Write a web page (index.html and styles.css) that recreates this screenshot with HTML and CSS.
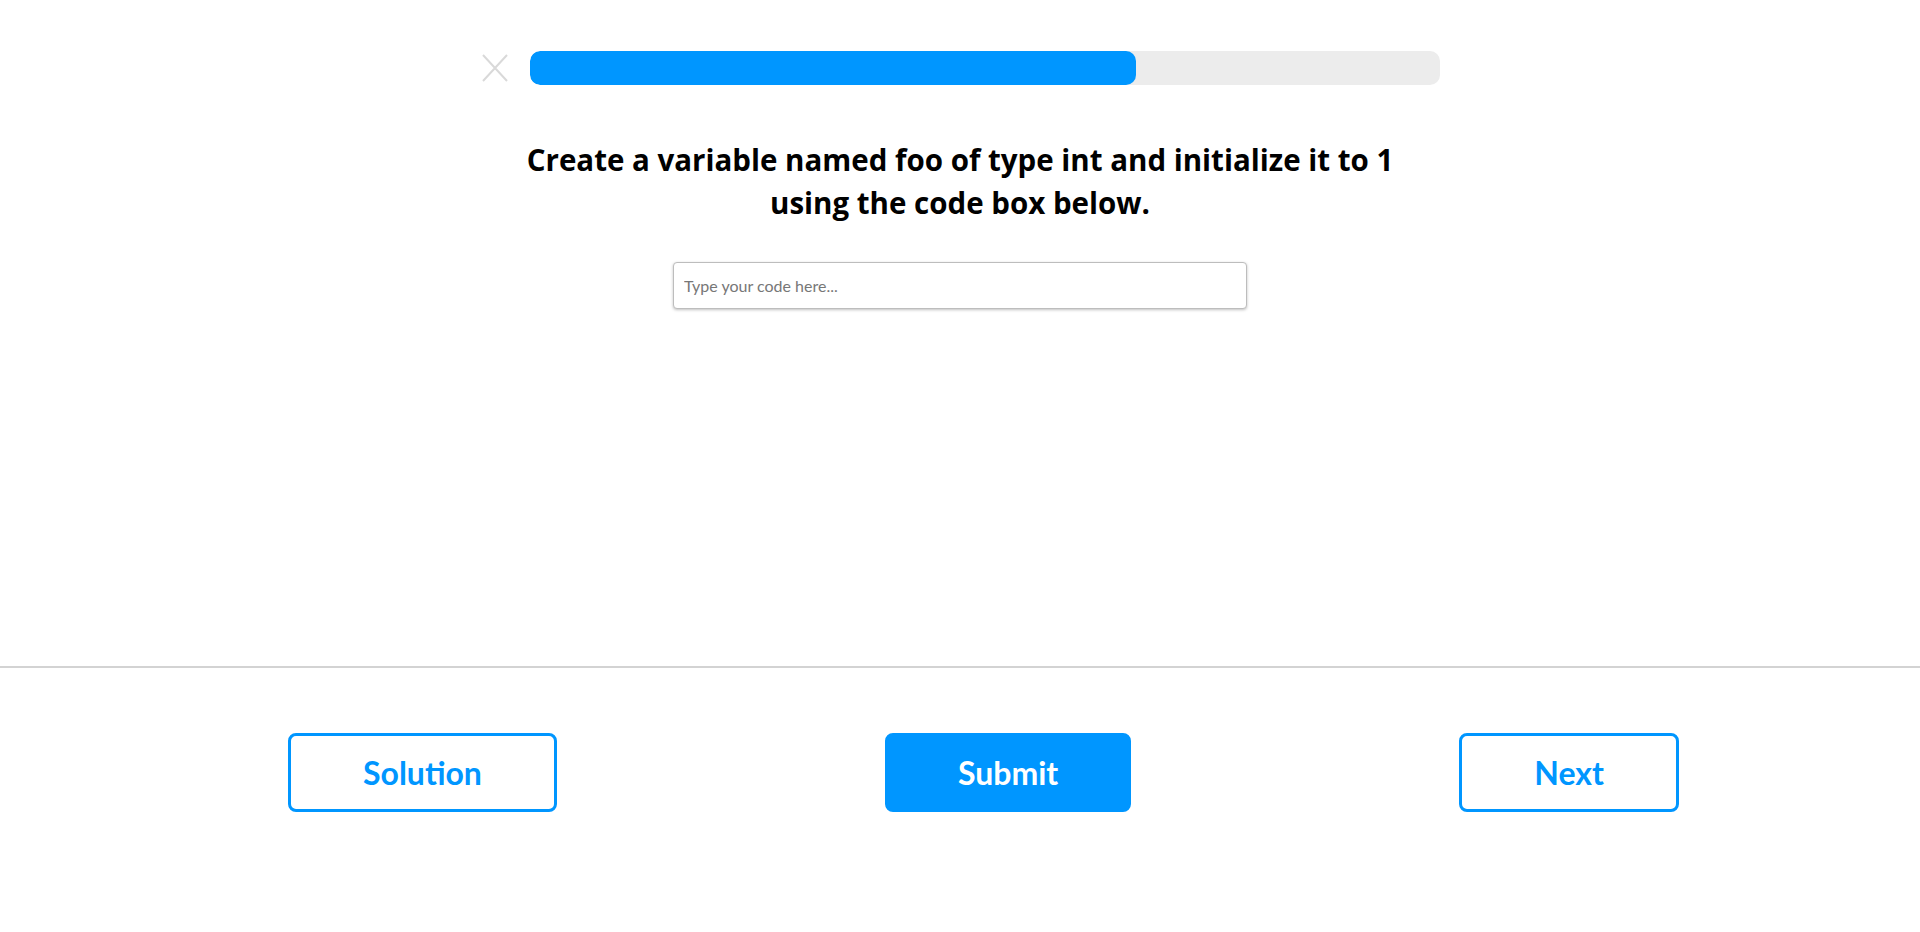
FILE: index.html
```html
<!DOCTYPE html>
<html lang="en">
<head>
<meta charset="utf-8">
<title>Lesson</title>
<link rel="stylesheet" href="styles.css">
</head>
<body>
<div class="page">
  <main class="lesson">
    <div class="progress-row">
      <button class="close" aria-label="Close">
        <svg width="28" height="28" viewBox="0 0 28 28"><path d="M2 1 L26 27 M26 1 L2 27" stroke="#d9d9d9" stroke-width="2" fill="none"/></svg>
      </button>
      <div class="progress"><div class="progress-fill" style="width:66.7%"></div></div>
    </div>
    <h1 class="question">Create a variable named foo of type int and initialize it to 1 using the code box below.</h1>
    <input class="code-input" type="text" placeholder="Type your code here...">
  </main>
  <footer class="footer">
    <div class="actions">
      <button class="btn btn-outline">Solution</button>
      <button class="btn btn-primary">Submit</button>
      <button class="btn btn-outline">Next</button>
    </div>
  </footer>
</div>
</body>
</html>
```
FILE: styles.css
```css
html, body {
  margin: 0;
  padding: 0;
  background: #fff;
  font-family: "Lato", "Noto Sans", sans-serif;
  color: #000;
}
.page {
  display: flex;
  flex-direction: column;
  min-height: 100vh;
}
.lesson {
  height: 666px;
  box-sizing: border-box;
  padding-top: 51px;
  display: flex;
  flex-direction: column;
  align-items: center;
}
.progress-row {
  display: flex;
  align-items: center;
  gap: 21px;
}
.close {
  width: 28px;
  height: 28px;
  padding: 0;
  border: 0;
  background: none;
  display: flex;
  cursor: pointer;
}
.progress {
  width: 910px;
  height: 34px;
  background: #ececec;
  border-radius: 10px;
  overflow: hidden;
}
.progress-fill {
  height: 100%;
  background: #0096ff;
  border-radius: 10px;
}
.question {
  margin: 53px 0 0;
  max-width: 890px;
  font-family: "Open Sans", "Lato", sans-serif;
  font-size: 29.5px;
  line-height: 43px;
  font-weight: 700;
  text-align: center;
}
.code-input {
  margin-top: 38px;
  width: 574px;
  height: 47px;
  box-sizing: border-box;
  border: 1px solid #bdbdbd;
  border-radius: 4px;
  box-shadow: 0 1px 3px rgba(0,0,0,0.25);
  padding: 0 10px;
  font-family: "Lato", sans-serif;
  font-size: 16px;
  outline: none;
}
.code-input::placeholder {
  color: #777;
}
.footer {
  border-top: 2px solid #d3d3d3;
  padding-top: 65px;
}
.actions {
  margin-left: 288px;
  display: flex;
  gap: 328px;
}
.btn {
  height: 79px;
  padding: 0 72px;
  border-radius: 8px;
  font-family: "Lato", sans-serif;
  font-size: 32px;
  font-weight: 700;
  cursor: pointer;
  box-sizing: border-box;
}
.btn-outline {
  background: #fff;
  color: #0096ff;
  border: 3px solid #0096ff;
}
.btn-primary {
  background: #0096ff;
  color: #fff;
  border: 3px solid #0096ff;
  padding: 0 70px;
}
```
